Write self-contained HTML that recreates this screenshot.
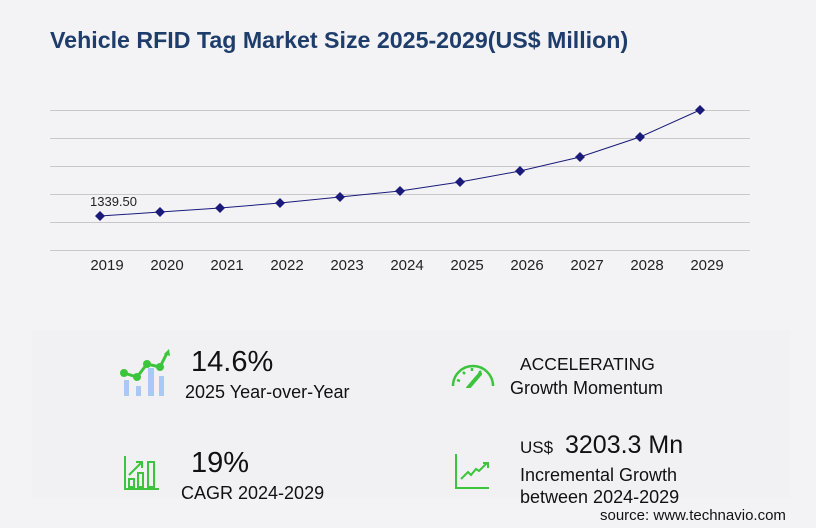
<!DOCTYPE html>
<html><head><meta charset="utf-8"><style>
body{margin:0;width:816px;height:528px;background:#f3f3f6;font-family:"Liberation Sans",sans-serif;position:relative;overflow:hidden}
.a{position:absolute;white-space:nowrap}
.t{left:50px;top:27px;font-size:23.2px;font-weight:bold;color:#1e3d6b}
.yr{font-size:15px;color:#222;top:257px;width:50px;text-align:center}
.panel{position:absolute;left:32px;top:330px;width:758px;height:168px;background:#f1f1f3}
.big{font-size:29px;color:#111}
.lab{font-size:18px;color:#111}
</style></head><body>
<div class="a t">Vehicle RFID Tag Market Size 2025-2029(US$ Million)</div>
<svg class="a" style="left:0;top:0" width="816" height="300">
<g stroke="#c8c8cc" stroke-width="1">
<line x1="50" y1="110.5" x2="750" y2="110.5"/><line x1="50" y1="138.5" x2="750" y2="138.5"/>
<line x1="50" y1="166.5" x2="750" y2="166.5"/><line x1="50" y1="194.5" x2="750" y2="194.5"/>
<line x1="50" y1="222.5" x2="750" y2="222.5"/><line x1="50" y1="250.5" x2="750" y2="250.5"/>
</g>
<polyline fill="none" stroke="#1a1a7a" stroke-width="1" points="100,216 160,212 220,208 280,203 340,197 400,191 460,182 520,171 580,157 640,137 700,110"/>
<g fill="#1a1a7a">
<path d="M100 211l5 5-5 5-5-5z"/><path d="M160 207l5 5-5 5-5-5z"/><path d="M220 203l5 5-5 5-5-5z"/>
<path d="M280 198l5 5-5 5-5-5z"/><path d="M340 192l5 5-5 5-5-5z"/><path d="M400 186l5 5-5 5-5-5z"/>
<path d="M460 177l5 5-5 5-5-5z"/><path d="M520 166l5 5-5 5-5-5z"/><path d="M580 152l5 5-5 5-5-5z"/>
<path d="M640 132l5 5-5 5-5-5z"/><path d="M700 105l5 5-5 5-5-5z"/>
</g>
<text x="90" y="206" font-size="13" fill="#222" font-family="Liberation Sans">1339.50</text>
</svg>
<div class="a yr" style="left:82px">2019</div><div class="a yr" style="left:142px">2020</div><div class="a yr" style="left:202px">2021</div>
<div class="a yr" style="left:262px">2022</div><div class="a yr" style="left:322px">2023</div><div class="a yr" style="left:382px">2024</div>
<div class="a yr" style="left:442px">2025</div><div class="a yr" style="left:502px">2026</div><div class="a yr" style="left:562px">2027</div>
<div class="a yr" style="left:622px">2028</div><div class="a yr" style="left:682px">2029</div>
<div class="panel"></div>
<svg class="a" style="left:118px;top:348px" width="54" height="50">
<g fill="#a9c8f5"><rect x="6" y="32" width="5" height="16"/><rect x="18" y="38" width="5" height="10"/><rect x="30" y="20" width="6" height="28"/><rect x="41" y="28" width="5" height="20"/></g>
<polyline fill="none" stroke="#3cc43c" stroke-width="3" points="6,25 19,29 29,16 42,19 49,5"/>
<g fill="#3cc43c"><circle cx="6" cy="25" r="4"/><circle cx="19" cy="29" r="4"/><circle cx="29" cy="16" r="4"/><circle cx="42" cy="19" r="4"/><path d="M46 6l5-5 1 7z"/></g>
</svg>
<div class="a big" style="left:191px;top:346px">14.6%</div>
<div class="a lab" style="left:185px;top:382px">2025 Year-over-Year</div>
<svg class="a" style="left:124px;top:455px" width="36" height="36" fill="none" stroke="#3cc43c" stroke-width="2">
<path d="M1 1v33h34"/><rect x="5" y="24" width="5" height="8"/><rect x="14" y="18" width="5" height="14"/><rect x="24" y="7" width="6" height="25"/>
<path d="M5 20l12-12M12 7h6v6"/></svg>
<div class="a big" style="left:191px;top:447px">19%</div>
<div class="a lab" style="left:181px;top:483px">CAGR 2024-2029</div>
<svg class="a" style="left:450px;top:358px" width="46" height="30" fill="none" stroke="#3cc43c" stroke-width="2.5">
<path d="M3 28A20 20 0 0 1 43 28"/><path d="M7 22l3 1M13 14l2 2M22 10v3M31 13l-2 2"/><path d="M30 16l-12 14" stroke-width="4" stroke-linecap="round"/></svg>
<div class="a" style="left:520px;top:354px;font-size:17.5px;color:#111">ACCELERATING</div>
<div class="a lab" style="left:510px;top:378px">Growth Momentum</div>
<svg class="a" style="left:455px;top:454px" width="36" height="36" fill="none" stroke="#3cc43c" stroke-width="2">
<path d="M1 0v34h33"/><path d="M6 25l7-7 3 3 5-6 3 2 8-8M28 9h5v5"/></svg>
<div class="a" style="left:520px;top:438px;font-size:17px;color:#111">US$</div>
<div class="a" style="left:565px;top:431px;font-size:25px;color:#111">3203.3 Mn</div>
<div class="a lab" style="left:520px;top:465px">Incremental Growth</div>
<div class="a lab" style="left:520px;top:487px">between 2024-2029</div>
<div class="a" style="left:600px;top:507px;font-size:15px;color:#111">source: www.technavio.com</div>
</body></html>
